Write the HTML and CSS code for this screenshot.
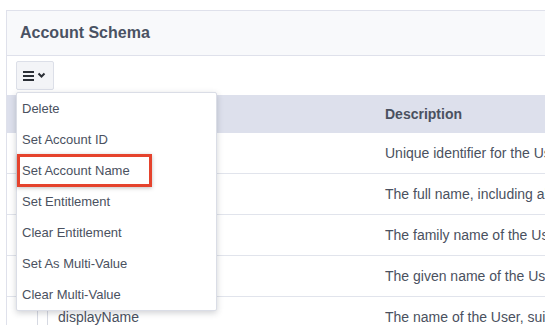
FILE: index.html
```html
<!DOCTYPE html>
<html lang="en">
<head>
  <meta charset="UTF-8" />
  <title>Account Schema</title>
  <link rel="stylesheet" href="styles.css">
</head>
<body>
  <div class="card">
    <div class="card-header">Account Schema</div>

    <div class="toolbar">
      <div class="dropdown">
        <button class="menu-btn" type="button">
          <svg width="24" height="12" viewBox="0 0 24 12">
            <rect x="0" y="1" width="11" height="2" fill="#2b2f36"/>
            <rect x="0" y="5" width="11" height="2" fill="#2b2f36"/>
            <rect x="0" y="9" width="11" height="2" fill="#2b2f36"/>
            <path d="M15.5 3.5 L18.5 6.5 L21.5 3.5" fill="none" stroke="#2b2f36" stroke-width="2"/>
          </svg>
        </button>
        <ul class="menu">
          <li>Delete</li>
          <li>Set Account ID</li>
          <li>Set Account Name</li>
          <li>Set Entitlement</li>
          <li>Clear Entitlement</li>
          <li>Set As Multi-Value</li>
          <li>Clear Multi-Value</li>
        </ul>
        <div class="callout"></div>
      </div>
    </div>

    <div class="table">
      <div class="row head">
        <div class="col-name"></div>
        <div class="col-desc">Description</div>
      </div>
      <div class="row">
        <div class="col-name"></div>
        <div class="col-desc">Unique identifier for the User</div>
      </div>
      <div class="row">
        <div class="col-name"></div>
        <div class="col-desc">The full name, including all middle names</div>
      </div>
      <div class="row">
        <div class="col-name"></div>
        <div class="col-desc">The family name of the User</div>
      </div>
      <div class="row">
        <div class="col-name"></div>
        <div class="col-desc">The given name of the User</div>
      </div>
      <div class="row">
        <div class="col-name tree"><span class="guide"></span><span class="guide"></span>displayName</div>
        <div class="col-desc">The name of the User, suitable for display</div>
      </div>
    </div>
  </div>
</body>
</html>
```

FILE: styles.css
```css
body {
  margin: 0;
  padding: 10px 0 0 6px;
  background: #fff;
  font-family: "Liberation Sans", Arial, sans-serif;
  color: #4a5160;
  overflow: hidden;
}

.card {
  width: 700px;
  border: 1px solid #dfe1eb;
  border-right: none;
  border-bottom: none;
}

.card-header {
  height: 44px;
  line-height: 44px;
  padding-left: 13px;
  background: #f8f9fb;
  border-bottom: 1px solid #dfe1eb;
  font-size: 16px;
  font-weight: bold;
  color: #4a5263;
}

.toolbar {
  height: 39px;
  padding: 5px 0 0 9px;
  box-sizing: border-box;
}

.dropdown {
  position: relative;
  width: 38px;
}

.menu-btn {
  display: flex;
  align-items: center;
  justify-content: center;
  width: 38px;
  height: 29px;
  padding: 0;
  background: #f3f4f7;
  border: 1px solid #dcdfe8;
  border-radius: 2px;
}

.menu {
  position: absolute;
  top: 31px;
  left: 0;
  z-index: 2;
  width: 201px;
  margin: 0;
  padding: 0;
  list-style: none;
  background: #fff;
  border: 1px solid #dadde6;
  border-radius: 2px;
  box-shadow: 0 2px 6px rgba(40, 45, 60, 0.22);
  box-sizing: border-box;
}

.menu li {
  height: 31px;
  line-height: 31px;
  padding-left: 5px;
  font-size: 13px;
  color: #4a5160;
}

.callout {
  position: absolute;
  top: 93px;
  left: 1px;
  z-index: 3;
  width: 135px;
  height: 33px;
  border: 3px solid #e5432d;
  box-sizing: border-box;
  box-shadow: 0 1px 4px rgba(0, 0, 0, 0.25);
}

.table {
  font-size: 14px;
}

.row {
  display: flex;
  height: 40px;
  align-items: center;
  border-bottom: 1px solid #e1e4ec;
}

.row.head {
  height: 38px;
  border-bottom: none;
  background: #dde0ec;
  font-weight: bold;
}

.col-name {
  width: 378px;
  flex: none;
  box-sizing: border-box;
  padding-left: 13px;
  align-self: stretch;
  display: flex;
  align-items: center;
}

.col-desc {
  flex: 1;
  white-space: nowrap;
}

.tree {
  padding-left: 30px;
}

.guide {
  align-self: stretch;
  width: 9px;
  border-left: 1px solid #d6d9e2;
  margin-top: -1px;
}

.guide + .guide {
  width: 10px;
}
```
